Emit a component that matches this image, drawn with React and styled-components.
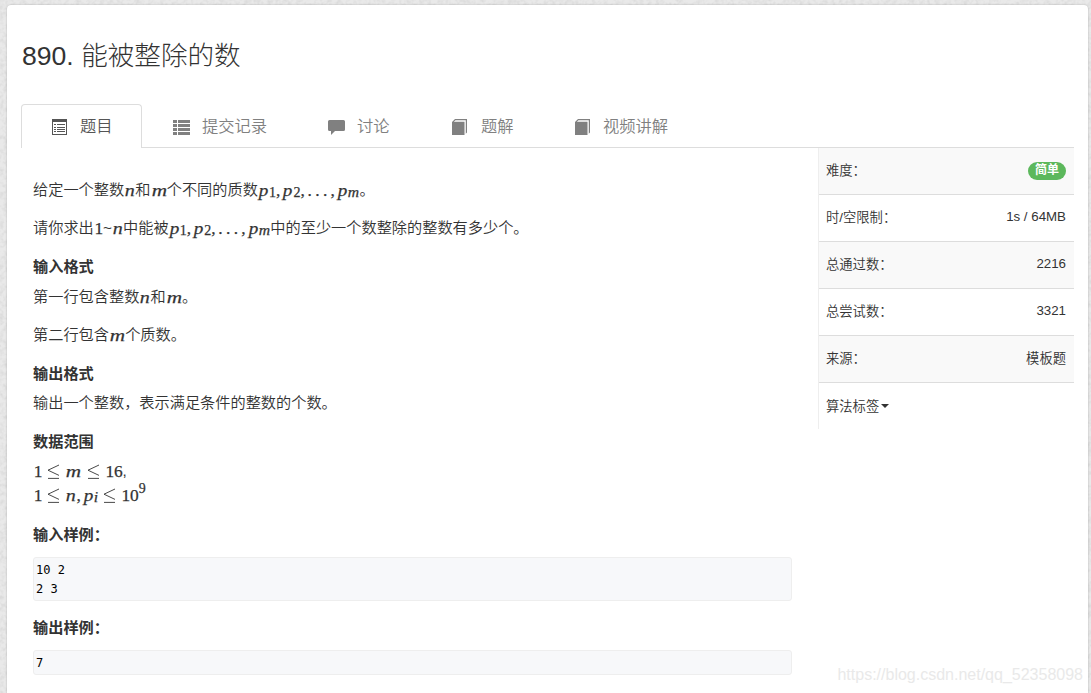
import React from "react";
import styled, { createGlobalStyle } from "styled-components";

const Global = createGlobalStyle`
  * { box-sizing: border-box; }
  html, body { margin: 0; height: 100%; overflow: hidden; }
  body {
    background: #e9e9e9;
    color: #333;
    font-family: "Liberation Sans", "Noto Sans CJK SC", sans-serif;
    font-size: 15.2px;
    font-weight: 350;
  }
`;

const Page = styled.div`
  position: relative;
  height: 693px;
  padding: 5px 3px 0 7px;
  overflow: hidden;
`;

const Texture = styled.svg`
  position: absolute;
  inset: 0;
  width: 100%;
  height: 100%;
`;

const Panel = styled.main`
  position: relative;
  height: 720px;
  padding: 0 14px 0 14px;
  background: #fff;
  border-radius: 4px;
  box-shadow: 0 0 2px rgba(0, 0, 0, 0.25);
`;

const Title = styled.h1`
  margin: 0;
  padding: 31px 0 0 1px;
  height: 99px;
  font-size: 26.6px;
  line-height: 40px;
  font-weight: 300;
`;

const Tabs = styled.nav`
  display: flex;
  height: 44px;
  border-bottom: 1px solid #ddd;
`;

const Tab = styled.a`
  display: flex;
  align-items: center;
  width: ${(p) => p.$width}px;
  height: 44px;
  padding: 0 0 2px 29px;
  gap: 12px;
  font-size: 16.3px;
  line-height: 24px;
  color: ${(p) => (p.$active ? "#555" : "#808080")};
  background: ${(p) => (p.$active ? "#fff" : "transparent")};
  border: 1px solid ${(p) => (p.$active ? "#ddd" : "transparent")};
  border-bottom: 0;
  border-radius: 4px 4px 0 0;

  & + & { padding-left: 30px; }
  & + & svg { margin-right: 1px; }
  svg { display: block; margin-top: 3px; }
`;

const Columns = styled.div`
  display: flex;
  justify-content: space-between;
`;

const Article = styled.article`
  width: 771px;
  padding: 30px 0 0 12px;
`;

const Line = styled.p`
  margin: 0 0 ${(p) => p.$gap ?? 14}px;
  height: 24px;
  line-height: 24px;
  white-space: nowrap;
`;

const Heading = styled(Line).attrs({ as: "h4" })`
  font-size: 15.2px;
  font-weight: 700;
`;

const Sample = styled.pre`
  margin: 0 0 ${(p) => p.$gap ?? 0}px;
  padding: 3px 2px 1px;
  width: 759px;
  background: #f7f8fa;
  border: 1px solid #eee;
  border-radius: 3px;
  color: #000;
  font: 12px/19px "DejaVu Sans Mono", monospace;
`;

const Glyph = styled.span`
  display: inline-block;
  width: ${(p) => p.$w}px;
  height: 24px;
  vertical-align: top;
  font-family: "Liberation Serif", serif;
  font-size: ${(p) => p.$size ?? 17.4}px;
  font-style: ${(p) => (p.$italic ? "italic" : "normal")};
  line-height: 24px;
  -webkit-text-stroke: 0.25px #333;
  transform: translate(0.7px, ${(p) => p.$dy ?? 0}px) scaleX(${(p) => p.$sx ?? 1});
  transform-origin: left center;
`;

const Relation = styled.svg`
  width: 24px;
  height: 24px;
  vertical-align: top;
`;

const Info = styled.dl`
  margin: 0;
  width: 256px;
  height: 281px;
  border-left: 1px solid #eee;
`;

const InfoRow = styled.div`
  display: flex;
  justify-content: space-between;
  align-items: center;
  height: 47px;
  padding: 0 8px 3px 7px;
  font-size: 13.3px;
  background: ${(p) => (p.$shade ? "#f9f9f9" : "#fff")};
  border-bottom: ${(p) => (p.$last ? 0 : "1px solid #ddd")};

  dt { display: flex; align-items: center; }
  dd { margin: 0; }
`;

const Badge = styled.span`
  display: block;
  width: 38px;
  height: 18px;
  margin-top: 2px;
  border-radius: 9px;
  background: #5cb85c;
  color: #fff;
  font-size: 12px;
  font-weight: 700;
  line-height: 16px;
  text-align: center;
`;

const Caret = styled.span`
  margin: 2px 0 0 2px;
  border: 4px solid transparent;
  border-top-color: #333;
  border-bottom: 0;
`;

const Watermark = styled.div`
  position: absolute;
  right: 8px;
  bottom: 8px;
  color: #e9e9e9;
  font-size: 16px;
  line-height: 20px;
`;

const V = ({ c, w, sx }) => (
  <Glyph $italic $w={w} $sx={sx}>{c}</Glyph>
);
const N = () => <V c="n" w={11.2} sx={1.15} />;
const M = () => <V c="m" w={16.2} sx={1.22} />;
const P = () => <V c="p" w={10.5} sx={1.1} />;
const Comma = () => <Glyph $w={7}>,</Glyph>;
const Sub = ({ c, w = 7, italic }) => (
  <Glyph $w={w} $size={14} $dy={3} $italic={italic} $sx={italic ? 1.12 : 1}>{c}</Glyph>
);
const Rel = () => (
  <Relation viewBox="0 0 24 24" fill="none" stroke="#333" strokeWidth="0.9">
    <path d="M18 6L7 11.2L18 16.4M7 19.4H18" />
  </Relation>
);

const Primes = () => (
  <>
    <P /><Sub c="1" /><Comma /><P /><Sub c="2" /><Comma />
    <Glyph $w={7.7}>.</Glyph><Glyph $w={7.7}>.</Glyph><Glyph $w={7.7}>.</Glyph>
    <Comma /><P /><Sub c="m" w={12.2} italic />
  </>
);

const ListAltIcon = () => (
  <svg width="17" height="17" viewBox="0 0 17 17" fill="currentColor" shapeRendering="crispEdges">
    <path fillRule="evenodd" d="M1 0h15v16H1zM2 3v12h13V3z" />
    <path d="M3 5h2v1H3zM6 5h8v1H6zM3 8h2v1H3zM6 8h8v1H6zM3 10h2v1H3zM6 10h8v1H6zM3 12h2v1H3zM6 12h8v1H6z" />
  </svg>
);
const ListIcon = () => (
  <svg width="17" height="17" viewBox="0 0 17 17" fill="currentColor">
    <path d="M0 1h4v3H0zM5 1h12v3H5zM0 5h4v3H0zM5 5h12v3H5zM0 9h4v3H0zM5 9h12v3H5zM0 13h4v3H0zM5 13h12v3H5z" />
  </svg>
);
const CommentIcon = () => (
  <svg width="17" height="17" viewBox="0 0 17 17" fill="currentColor">
    <path d="M1.500 1h14q1.500 0 1.500 1.500v8q0 1.500-1.500 1.500H7l-4 4v-4H1.500Q0 12 0 10.500v-8Q0 1 1.500 1z" />
  </svg>
);
const BookIcon = () => (
  <svg width="17" height="17" viewBox="0 0 17 17" fill="currentColor">
    <path d="M4 0h12v13.500l-1.200 1.200V1.200H4.500L2.800 2.800H13.500V16H1V3z" />
  </svg>
);

const tabs = [
  { label: "题目", Icon: ListAltIcon, width: 121, active: true },
  { label: "提交记录", Icon: ListIcon, width: 155 },
  { label: "讨论", Icon: CommentIcon, width: 123 },
  { label: "题解", Icon: BookIcon, width: 123 },
  { label: "视频讲解", Icon: BookIcon, width: 156 },
];

const info = [
  ["难度：", <Badge key="b">简单</Badge>],
  ["时/空限制：", "1s / 64MB"],
  ["总通过数：", "2216"],
  ["总尝试数：", "3321"],
  ["来源：", "模板题"],
];

export default function App() {
  return (
    <Page lang="zh-CN">
      <Global />
      <Texture>
        <filter id="grain">
          <feTurbulence type="fractalNoise" baseFrequency="0.25" numOctaves="3" />
          <feColorMatrix values="0 0 0 0 0  0 0 0 0 0  0 0 0 0 0  0.13 0 0 0 -0.05" />
        </filter>
        <rect width="100%" height="100%" filter="url(#grain)" />
      </Texture>
      <Panel>
        <Title>890. 能被整除的数</Title>
        <Tabs>
          {tabs.map(({ label, Icon, width, active }) => (
            <Tab key={label} $width={width} $active={active}>
              <Icon />
              {label}
            </Tab>
          ))}
        </Tabs>
        <Columns>
          <Article>
            <Line>给定一个整数<N />和<M />个不同的质数<Primes />。</Line>
            <Line $gap={15}>请你求出<Glyph $w={9.2}>1</Glyph>~<N />中能被<Primes />中的至少一个数整除的整数有多少个。</Line>
            <Heading $gap={6}>输入格式</Heading>
            <Line>第一行包含整数<N />和<M />。</Line>
            <Line $gap={15}>第二行包含<M />个质数。</Line>
            <Heading $gap={5}>输出格式</Heading>
            <Line $gap={15}>输出一个整数，表示满足条件的整数的个数。</Line>
            <Heading $gap={5}>数据范围</Heading>
            <Line $gap={0}><Glyph $w={7.5}>1</Glyph><Rel /><M /><Rel /><Glyph $w={17.8}>16</Glyph>,</Line>
            <Line $gap={16}><Glyph $w={7.5}>1</Glyph><Rel /><N /><Comma /><P /><Sub c="i" w={3.5} italic /><Rel /><Glyph $w={17.4}>10</Glyph><Glyph $w={8} $size={14} $dy={-6}>9</Glyph></Line>
            <Heading $gap={10}>输入样例：</Heading>
            <Sample $gap={15}>{"10 2\n2 3"}</Sample>
            <Heading $gap={10}>输出样例：</Heading>
            <Sample>7</Sample>
          </Article>
          <Info>
            {info.map(([label, value], i) => (
              <InfoRow key={label} $shade={i % 2 === 0}>
                <dt>{label}</dt>
                <dd>{value}</dd>
              </InfoRow>
            ))}
            <InfoRow $last>
              <dt>算法标签<Caret /></dt>
            </InfoRow>
          </Info>
        </Columns>
      </Panel>
      <Watermark>https://blog.csdn.net/qq_52358098</Watermark>
    </Page>
  );
}
